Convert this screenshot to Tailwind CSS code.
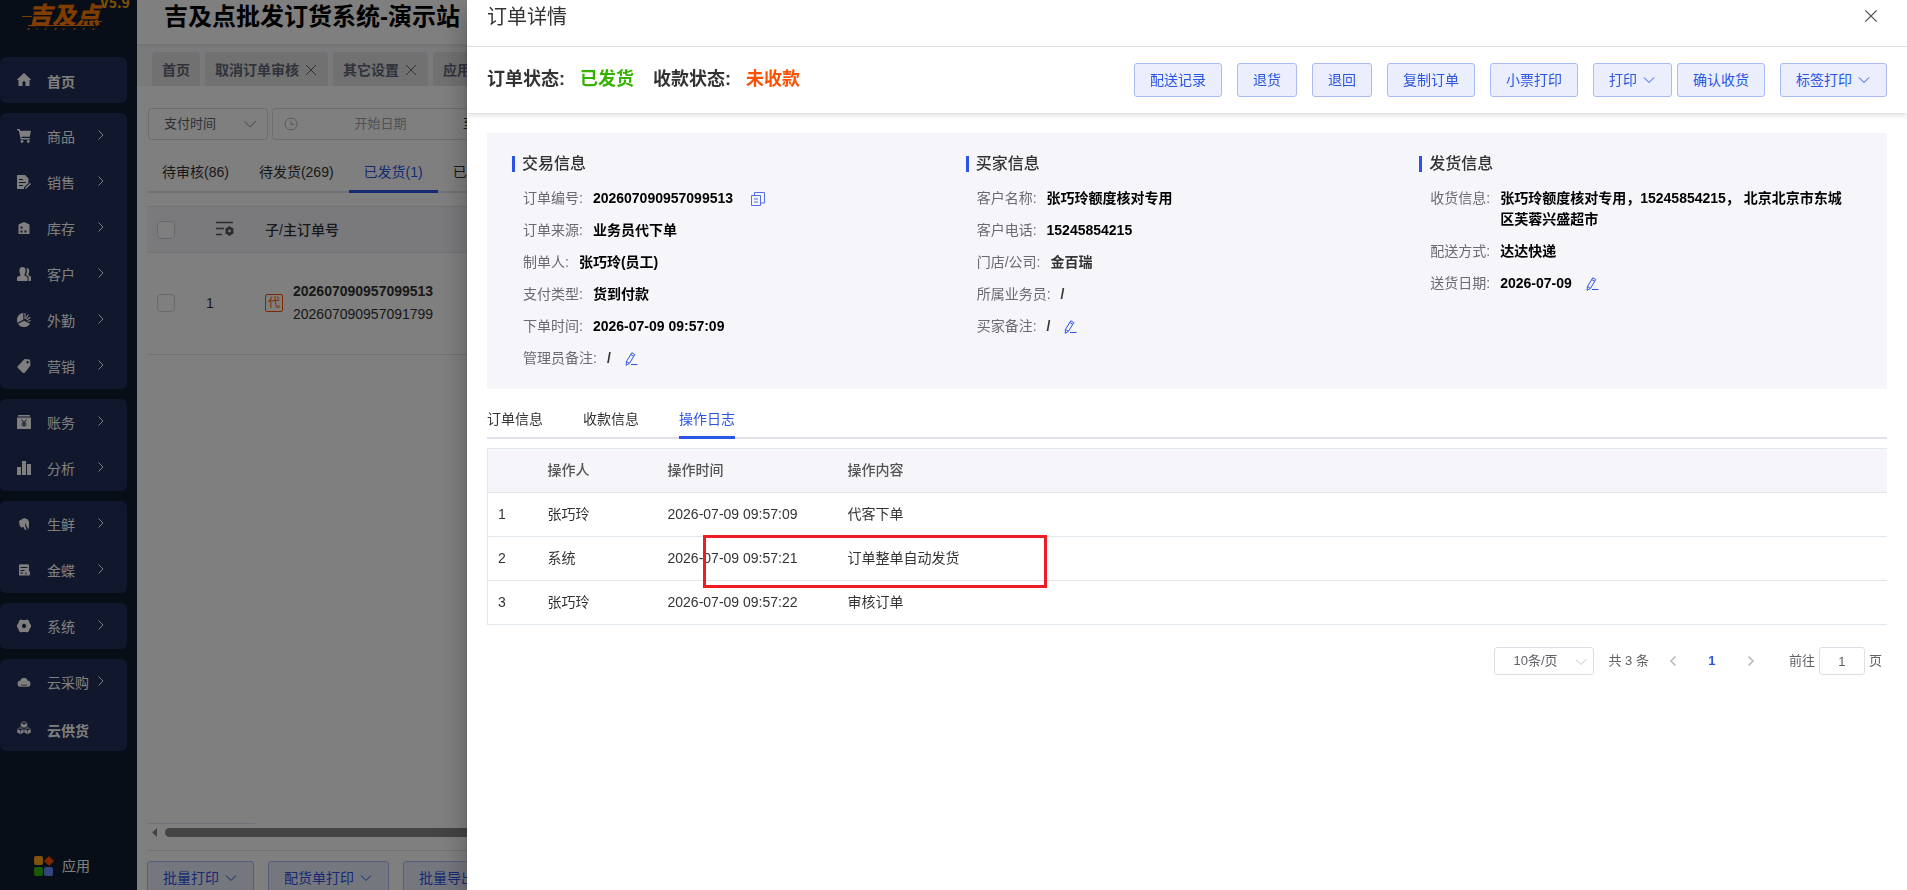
<!DOCTYPE html>
<html lang="zh-CN">

<head>
    <meta charset="UTF-8">
    <meta name="viewport" content="width=device-width, initial-scale=1.0">
    <script src="https://cdn.jsdelivr.net/npm/@tailwindcss/browser@4"></script>
    <title>订单详情</title>
</head>

<body class="h-screen overflow-hidden bg-white text-sm text-[#333333] font-['Liberation_Sans','Noto_Sans_CJK_SC',sans-serif]">
    <!-- shared icons -->
    <svg class="hidden">
        <symbol id="down" viewBox="0 0 14 14"><path d="M2 4.500l5 5 5-5" fill="none" stroke="currentColor" /></symbol>
        <symbol id="right" viewBox="0 0 8 12"><path d="M1.500 1.500L6 6l-4.500 4.500" fill="none" stroke="currentColor" /></symbol>
        <symbol id="close" viewBox="0 0 14 14"><path d="M2 2l10 10M12 2L2 12" fill="none" stroke="currentColor" /></symbol>
        <symbol id="edit" viewBox="0 0 14 14"><path d="M7.800.8l3 1.700-5.300 8.800-3.300 2 .2-3.800zM6.800 2.600l3 1.800M2.500 9.500l3 1.800M7 12.500h6.500" fill="none" stroke="currentColor" /></symbol>
    </svg>

    <div class="flex h-full">
        <!-- sidebar -->
        <aside class="flex h-full w-[137px] shrink-0 flex-col bg-[#101c30] text-white">
            <div class="relative h-[57px] shrink-0">
                <span class="absolute -top-2 left-[100px] text-sm leading-5 font-bold text-[#f5a800] font-['Noto_Sans_CJK_SC',sans-serif]">V5.9</span>
                <div class="pt-1 pl-7 text-2xl leading-6 font-black text-[#ff7a00] italic">吉及点</div>
                <svg class="absolute top-4 left-5" width="84" height="16" fill="#ff7a00">
                    <path d="M2 0h10v1H2zM70 5h12v1H70zM8 9h66v1H8z" />
                    <path d="M8 12h2l-1 2H7zM17 12h1l-1 2h-1zM26 12h1l-1 2h-2zM35 12h2l-1 2h-2zM44 12h1l-1 2h-2zM54 12h2l-1 2h-2zM63 12h2l-1 2h-1zM73 12h2l-1 2h-2z" opacity=".7" />
                </svg>
            </div>
            <nav class="flex w-[127px] flex-col gap-2.5">
                <div class="rounded-md bg-[#222e58]">
                    <a href="#" class="flex h-[46px] items-center pl-[17px] font-bold">
                        <svg class="size-3.5" viewBox="0 0 14 14" fill="currentColor"><path d="M7 0l7 6.500-.7.8-.8-.3V13H8.500V9.500a1.500 1.500 0 0 0-3 0V13h-4V7l-.8.3L0 6.500z" /></svg>
                        <span class="pt-1 pl-4">首页</span>
                    </a>
                </div>
                <div class="rounded-md bg-[#222e58]">
                    <a href="#" class="flex h-[46px] items-center pl-[17px]">
                        <svg class="size-3.5" viewBox="0 0 14 14" fill="currentColor"><path d="M0 0h2.800l.5 1.700H14l-1.300 6H4.500l.3 1.300h8v1.400H3.700L1.800 1.400H0z" /><circle cx="5" cy="12.500" r="1.400" /><circle cx="11.300" cy="12.500" r="1.400" /></svg>
                        <span class="w-[66px] pt-0.5 pl-4 whitespace-nowrap">商品</span>
                        <svg class="mb-0.5 h-3 w-2"><use href="#right" /></svg>
                    </a>
                    <a href="#" class="flex h-[46px] items-center pl-[17px]">
                        <svg class="size-3.5" viewBox="0 0 14 14" fill="currentColor"><path fill-rule="evenodd" d="M0 0h8l3.500 3.500V8L7 12.500V14H0zM2 4v1h4V4zm0 3v1h7V7zm0 3v1h4v-1z" /><path d="M8.500 12.500l4.500-4.500 1 1-4.500 4.500-1.500.5z" /></svg>
                        <span class="w-[66px] pt-0.5 pl-4 whitespace-nowrap">销售</span>
                        <svg class="mb-0.5 h-3 w-2"><use href="#right" /></svg>
                    </a>
                    <a href="#" class="flex h-[46px] items-center pl-[17px]">
                        <svg class="size-3.5" viewBox="0 0 14 14" fill="currentColor"><path fill-rule="evenodd" d="M7 1l5.500 2.500V13h-11V3.500zM3.500 5.500v2h2v-2zm0 4v2h2v-2zm4 0v2h2v-2z" /></svg>
                        <span class="w-[66px] pt-0.5 pl-4 whitespace-nowrap">库存</span>
                        <svg class="mb-0.5 h-3 w-2"><use href="#right" /></svg>
                    </a>
                    <a href="#" class="flex h-[46px] items-center pl-[17px]">
                        <svg class="size-3.5" viewBox="0 0 14 14" fill="currentColor"><path d="M5.500 0C8 0 8.800 1.800 8.600 4 8.400 6 7.500 7 7.500 8.500l3 1.500V14H0v-4l3.500-1.500C3.500 7 2.500 6 2.400 4 2.200 1.800 3 0 5.500 0z" /><path d="M9.300 1c2 0 3 1.200 2.900 3-.1 1.700-.8 2.500-.8 4L14 9.800V14h-2.500V9.500l-2.500-1.400c.2-1 .8-2.100.9-3.800C10 3 9.800 1.800 9.300 1z" /></svg>
                        <span class="w-[66px] pt-0.5 pl-4 whitespace-nowrap">客户</span>
                        <svg class="mb-0.5 h-3 w-2"><use href="#right" /></svg>
                    </a>
                    <a href="#" class="flex h-[46px] items-center pl-[17px]">
                        <svg class="size-3.5" viewBox="0 0 14 14" fill="currentColor"><path d="M6.300 0v6.700L.5 9.800A7 7 0 0 1 6.300 0zM7 7.800l6 3A7 7 0 0 1 1 10.800z" /><path d="M8 0v6M9 5.500L11.500 1.500M9.500 7L13.300 4.200M10.500 8.500l3.300-1" stroke="currentColor" stroke-width="1.200" /></svg>
                        <span class="w-[66px] pt-0.5 pl-4 whitespace-nowrap">外勤</span>
                        <svg class="mb-0.5 h-3 w-2"><use href="#right" /></svg>
                    </a>
                    <a href="#" class="flex h-[46px] items-center pl-[17px]">
                        <svg class="size-3.5" viewBox="0 0 14 14" fill="currentColor"><path fill-rule="evenodd" d="M7.500 0L13 .5l.5 6L7.500 14H6L.5 8.500V7.500zM10.500 2a1.200 1.200 0 1 0 .1 0z" /></svg>
                        <span class="w-[66px] pt-0.5 pl-4 whitespace-nowrap">营销</span>
                        <svg class="mb-0.5 h-3 w-2"><use href="#right" /></svg>
                    </a>
                </div>
                <div class="rounded-md bg-[#222e58]">
                    <a href="#" class="flex h-[46px] items-center pl-[17px]">
                        <svg class="size-3.5" viewBox="0 0 14 14" fill="currentColor"><path d="M1 0h12v1.500H1zM0 2.500h14V14H0z" /><path d="M4.500 4.500L7 7.500l2.500-3M4.500 8h5M4.500 10h5M7 7.500V12" fill="none" stroke="#222e58" /></svg>
                        <span class="w-[66px] pt-0.5 pl-4 whitespace-nowrap">账务</span>
                        <svg class="mb-0.5 h-3 w-2"><use href="#right" /></svg>
                    </a>
                    <a href="#" class="flex h-[46px] items-center pl-[17px]">
                        <svg class="size-3.5" viewBox="0 0 14 14" fill="currentColor"><path d="M0 6h4v8H0zM5 0h4v14H5zM10 3h4v11h-4z" /></svg>
                        <span class="w-[66px] pt-0.5 pl-4 whitespace-nowrap">分析</span>
                        <svg class="mb-0.5 h-3 w-2"><use href="#right" /></svg>
                    </a>
                </div>
                <div class="rounded-md bg-[#222e58]">
                    <a href="#" class="flex h-[46px] items-center pl-[17px]">
                        <svg class="size-3.5" viewBox="0 0 14 14" fill="currentColor"><path d="M7 1l4 1.500L12 5v5l-.5 2.500L9 8l-.5-2L8 8l1.500 5H8L6.500 10 4 10.500 2.500 8 2 4z" /></svg>
                        <span class="w-[66px] pt-0.5 pl-4 whitespace-nowrap">生鲜</span>
                        <svg class="mb-0.5 h-3 w-2"><use href="#right" /></svg>
                    </a>
                    <a href="#" class="flex h-[46px] items-center pl-[17px]">
                        <svg class="size-3.5" viewBox="0 0 14 14" fill="currentColor"><path fill-rule="evenodd" d="M2 1.500h2.500V1h1.300v.5h2.400V1h1.300v.5H12V8l1 1v3l-1 .5H2zM3.500 4v1h7V4zm0 3v1h4V7zm0 2.500v1H6v-1zm5 0v2h1v-2z" /></svg>
                        <span class="w-[66px] pt-0.5 pl-4 whitespace-nowrap">金蝶</span>
                        <svg class="mb-0.5 h-3 w-2"><use href="#right" /></svg>
                    </a>
                </div>
                <div class="rounded-md bg-[#222e58]">
                    <a href="#" class="flex h-[46px] items-center pl-[17px]">
                        <svg class="size-3.5" viewBox="0 0 14 14" fill="currentColor"><path fill-rule="evenodd" d="M4 .5L5.500 1h3L10 .5l2 1.200.5 2.300L14 6v2l-1.500 2-.5 2.300-2 1.200-1.500-.5h-3l-1.500.5-2-1.200-.5-2.300L0 8V6l1.500-2L2 1.700zM7 4.800a2.200 2.200 0 1 0 .1 0z" /></svg>
                        <span class="w-[66px] pt-0.5 pl-4 whitespace-nowrap">系统</span>
                        <svg class="mb-0.5 h-3 w-2"><use href="#right" /></svg>
                    </a>
                </div>
                <div class="rounded-md bg-[#222e58]">
                    <a href="#" class="flex h-[46px] items-center pl-[17px]">
                        <svg class="size-3.5" viewBox="0 0 14 14" fill="currentColor"><path fill-rule="evenodd" d="M3.500 5.500a3.600 3.600 0 0 1 7 0A3.200 3.200 0 0 1 11 11.800H3a3.200 3.200 0 0 1 .5-6.300zM4 9.800v.8h6v-.8z" /></svg>
                        <span class="w-[66px] pt-0.5 pl-4 whitespace-nowrap">云采购</span>
                        <svg class="mb-0.5 h-3 w-2"><use href="#right" /></svg>
                    </a>
                    <a href="#" class="flex h-[46px] items-center pl-[17px] font-bold">
                        <svg class="size-3.5" viewBox="0 0 14 14" fill="currentColor" stroke="#222e58" stroke-width=".5"><path d="M7 0l3.500 1.600v4L7 7.200 3.500 5.600v-4zM3.500 6L7 7.600v4l-3.500 2L0 11.600v-4zM10.500 6L14 7.600v4l-3.500 2L7 11.600v-4zM3.500 1.600L7 3.200l3.500-1.600M0 7.600l3.500 1.800L7 7.600l3.500 1.800L14 7.600M3.500 9.400v4M10.500 9.400v4" /></svg>
                        <span class="pt-1.5 pl-4">云供货</span>
                    </a>
                </div>
            </nav>
            <a href="#" class="mt-auto mb-3.5 flex items-center gap-2 pl-[34px]">
                <svg width="20" height="20"><rect width="9" height="9" rx="2" fill="#ffa51e" /><path d="M15 .5l4.500 4.500-4.500 4.500-4.500-4.500z" fill="#ff5000" stroke="#ff5000" stroke-linejoin="round" /><rect y="11" width="9" height="9" rx="2" fill="#36b300" /><rect x="10" y="11" width="9" height="9" rx="2" fill="#6a8dff" /></svg>
                <span>应用</span>
            </a>
        </aside>

        <!-- order list behind the drawer -->
        <main class="flex min-w-0 flex-1 flex-col overflow-hidden">
            <h1 class="h-11 shrink-0 pt-[5px] pl-[27px] text-2xl leading-6 font-bold whitespace-nowrap text-black">吉及点批发订货系统-演示站</h1>
            <div class="flex h-[42px] shrink-0 items-end gap-[5px] bg-[#f5f5fa] pl-[15px] font-bold whitespace-nowrap text-[#606676] shadow-[inset_0_3px_3px_-2px_#dcdce2]">
                <a href="#" class="flex h-[34px] items-center rounded-t bg-[#e2e2e2] px-2.5 pt-px">首页</a>
                <a href="#" class="flex h-[34px] items-center gap-[5px] rounded-t bg-[#e2e2e2] px-2.5 pt-px">取消订单审核<svg class="size-3.5"><use href="#close" /></svg></a>
                <a href="#" class="flex h-[34px] items-center gap-[5px] rounded-t bg-[#e2e2e2] px-2.5 pt-px">其它设置<svg class="size-3.5"><use href="#close" /></svg></a>
                <a href="#" class="flex h-[34px] items-center gap-[5px] rounded-t bg-[#e2e2e2] px-2.5 pt-px">应用<svg class="size-3.5"><use href="#close" /></svg></a>
            </div>
            <div class="flex min-h-0 flex-1 flex-col pt-[22px] pl-2.5">
                <div class="flex gap-1 text-[13px]">
                    <div class="relative ml-px w-[120px]">
                        <select aria-label="时间类型" class="h-8 w-full appearance-none rounded border border-[#d9dce6] pl-[15px] text-[#606266]">
                            <option>支付时间</option>
                        </select>
                        <svg class="absolute top-2 right-2.5 size-4 text-[#b0b4bd]"><use href="#down" /></svg>
                    </div>
                    <div class="flex h-8 w-[350px] items-center rounded border border-[#d9dce6] pl-[11px]">
                        <svg class="size-3.5 text-[#b0b4bd]" viewBox="0 0 14 14" fill="none" stroke="currentColor"><circle cx="7" cy="7" r="6" /><path d="M7 3.500V7.500h3" /></svg>
                        <input aria-label="开始日期" placeholder="开始日期" class="w-[165px] text-center placeholder:text-[#a0a3aa]">
                        <span>至</span>
                    </div>
                </div>
                <div class="mt-[11px] flex h-[42px] shrink-0 border-b-2 border-[#dfe4ed] whitespace-nowrap">
                    <button class="px-[15px] pt-0.5">待审核(86)</button>
                    <button class="px-[15px] pt-0.5">待发货(269)</button>
                    <button class="-mb-0.5 border-b-[3px] border-[#2b54e6] px-[15px] pt-0.5 text-[#2b54e6]">已发货(1)</button>
                    <button class="px-[15px] pt-0.5">已完成(12)</button>
                </div>
                <table class="mt-[13px] w-full table-fixed text-left">
                    <thead>
                        <tr class="h-[46px] border-y border-[#e4e6ee] bg-[#f5f5fa]">
                            <th class="w-[59px] pl-2.5"><input type="checkbox" aria-label="全选" class="block size-[18px] appearance-none rounded-sm border border-[#d0d3dc] bg-white"></th>
                            <th class="w-[59px] pl-2.5">
                                <svg class="mb-0.5" width="18" height="16" fill="none" stroke="#555" stroke-width="1.500"><path d="M0 1.500h17M0 7.500h8M0 13.500h6" /><circle cx="13.500" cy="10" r="2.700" stroke-width="2.500" /><path d="M13.500 5v2M13.500 13v2M9.500 7.500l1.500 1M16 11.500l1.500 1M9.500 12.500l1.500-1M16 8.500l1.500-1" /></svg>
                            </th>
                            <th class="font-medium">子/主订单号</th>
                        </tr>
                    </thead>
                    <tbody>
                        <tr class="h-[102px] border-b border-[#e4e6ee]">
                            <td class="pb-0.5 pl-2.5"><input type="checkbox" aria-label="选择订单" class="block size-[18px] appearance-none rounded-sm border border-[#d0d3dc] bg-white"></td>
                            <td class="pb-0.5">1</td>
                            <td class="pb-0.5">
                                <div class="flex items-center gap-2.5">
                                    <span class="flex size-[18px] items-center justify-center rounded-[2px] border border-[#ff5000] text-xs text-[#ff5000]">代</span>
                                    <div class="leading-[23px]">
                                        <b class="block">202607090957099513</b>
                                        <span class="block">202607090957091799</span>
                                    </div>
                                </div>
                            </td>
                        </tr>
                    </tbody>
                </table>
                <div class="mt-auto w-[108px] border-t border-[#dfe2f0]"></div>
                <div class="flex h-[26px] shrink-0 items-center gap-2 pb-2.5 pl-[5px]">
                    <svg width="5" height="9" fill="#888"><path d="M5 0v9L0 4.500z" /></svg>
                    <div class="h-[9px] flex-1 rounded-full bg-[#888888]"></div>
                </div>
                <div class="flex h-10 shrink-0 gap-3.5 border-t border-[#e4e6ee] pt-2.5 whitespace-nowrap text-[#2b54e6]">
                    <button class="flex h-[34px] items-center gap-[5px] rounded-[3px] border border-[#aabbf5] bg-[#eaeefd] px-[15px]">批量打印<svg class="size-3.5"><use href="#down" /></svg></button>
                    <button class="flex h-[34px] items-center gap-[5px] rounded-[3px] border border-[#aabbf5] bg-[#eaeefd] px-[15px]">配货单打印<svg class="size-3.5"><use href="#down" /></svg></button>
                    <button class="flex h-[34px] items-center gap-[5px] rounded-[3px] border border-[#aabbf5] bg-[#eaeefd] px-[15px]">批量导出<svg class="size-3.5"><use href="#down" /></svg></button>
                </div>
            </div>
        </main>
    </div>

    <!-- mask -->
    <div class="fixed inset-0 bg-black/50"></div>

    <!-- order detail drawer -->
    <section role="dialog" aria-labelledby="drawer-title" class="fixed inset-y-0 right-0 left-[467px] bg-white shadow-[0_8px_10px_-5px_rgba(0,0,0,0.2),0_16px_24px_2px_rgba(0,0,0,0.14),0_6px_30px_5px_rgba(0,0,0,0.12)]">
        <header class="flex h-[47px] items-start justify-between border-b border-[#dfe6ec] pr-7 pl-5">
            <h2 id="drawer-title" class="pt-[3px] text-xl leading-7">订单详情</h2>
            <button aria-label="关闭" class="pt-2 text-[#444444]"><svg class="size-4"><use href="#close" /></svg></button>
        </header>
        <div class="flex h-[66px] items-center justify-between px-5 shadow-[0_2px_5px_rgba(0,0,0,0.15)]">
            <div class="flex pb-0.5 text-lg leading-7 font-bold whitespace-nowrap">
                <span class="mr-[15px]">订单状态:</span>
                <span class="mr-[19px] text-[#36b300]">已发货</span>
                <span class="mr-[15px]">收款状态:</span>
                <span class="text-[#ff5000]">未收款</span>
            </div>
            <div class="flex gap-[15px] whitespace-nowrap text-[#2b54e6]">
                <button class="h-[34px] rounded-[3px] border border-[#aabbf5] bg-[#eaeefd] px-[15px]">配送记录</button>
                <button class="h-[34px] rounded-[3px] border border-[#aabbf5] bg-[#eaeefd] px-[15px]">退货</button>
                <button class="h-[34px] rounded-[3px] border border-[#aabbf5] bg-[#eaeefd] px-[15px]">退回</button>
                <button class="h-[34px] rounded-[3px] border border-[#aabbf5] bg-[#eaeefd] px-[15px]">复制订单</button>
                <button class="h-[34px] rounded-[3px] border border-[#aabbf5] bg-[#eaeefd] px-[15px]">小票打印</button>
                <div class="flex gap-[5px]">
                    <button class="flex h-[34px] items-center gap-[5px] rounded-[3px] border border-[#aabbf5] bg-[#eaeefd] px-[15px]">打印<svg class="size-3.5"><use href="#down" /></svg></button>
                    <button class="h-[34px] rounded-[3px] border border-[#aabbf5] bg-[#eaeefd] px-[15px]">确认收货</button>
                </div>
                <button class="flex h-[34px] items-center gap-[5px] rounded-[3px] border border-[#aabbf5] bg-[#eaeefd] px-[15px]">标签打印<svg class="size-3.5"><use href="#down" /></svg></button>
            </div>
        </div>

        <div class="px-5 pt-5">
            <div class="grid min-h-64 grid-cols-3 bg-[#f5f5fa] pt-[22px] pr-3.5 pl-[25px]">
                <div>
                    <h3 class="flex items-center gap-[7px] text-base leading-[18px] font-medium before:h-4 before:w-[3px] before:bg-[#2b54e6]">交易信息</h3>
                    <dl class="flex flex-col gap-[11px] pt-[15px] pl-[11px] leading-[21px]">
                        <div class="flex gap-2.5"><dt class="text-[#6b6b6f]">订单编号:</dt><dd class="flex items-center font-bold text-black">202607090957099513
                            <button aria-label="复制" class="ml-[18px] text-[#4f70ea]"><svg class="size-3.5" viewBox="0 0 14 14" fill="none" stroke="currentColor"><path d="M.5 3.500h9v10h-9zM3.500 3.500v-3h10v10.500h-4M3 7h4M3 10h4" /></svg></button></dd></div>
                        <div class="flex gap-2.5"><dt class="text-[#6b6b6f]">订单来源:</dt><dd class="font-bold text-black">业务员代下单</dd></div>
                        <div class="flex gap-2.5"><dt class="text-[#6b6b6f]">制单人:</dt><dd class="font-bold text-black">张巧玲(员工)</dd></div>
                        <div class="flex gap-2.5"><dt class="text-[#6b6b6f]">支付类型:</dt><dd class="font-bold text-black">货到付款</dd></div>
                        <div class="flex gap-2.5"><dt class="text-[#6b6b6f]">下单时间:</dt><dd class="font-bold text-black">2026-07-09 09:57:09</dd></div>
                        <div class="flex gap-2.5"><dt class="text-[#6b6b6f]">管理员备注:</dt><dd class="flex items-center font-bold">/
                            <button aria-label="编辑管理员备注" class="ml-[13px] text-[#2b54e6]"><svg class="size-3.5"><use href="#edit" /></svg></button></dd></div>
                    </dl>
                </div>
                <div>
                    <h3 class="flex items-center gap-[7px] text-base leading-[18px] font-medium before:h-4 before:w-[3px] before:bg-[#2b54e6]">买家信息</h3>
                    <dl class="flex flex-col gap-[11px] pt-[15px] pl-[11px] leading-[21px]">
                        <div class="flex gap-2.5"><dt class="text-[#6b6b6f]">客户名称:</dt><dd class="font-bold text-black">张巧玲额度核对专用</dd></div>
                        <div class="flex gap-2.5"><dt class="text-[#6b6b6f]">客户电话:</dt><dd class="font-bold text-black">15245854215</dd></div>
                        <div class="flex gap-2.5"><dt class="text-[#6b6b6f]">门店/公司:</dt><dd class="font-bold">金百瑞</dd></div>
                        <div class="flex gap-2.5"><dt class="text-[#6b6b6f]">所属业务员:</dt><dd class="font-bold">/</dd></div>
                        <div class="flex gap-2.5"><dt class="text-[#6b6b6f]">买家备注:</dt><dd class="flex items-center font-bold">/
                            <button aria-label="编辑买家备注" class="ml-[13px] text-[#2b54e6]"><svg class="size-3.5"><use href="#edit" /></svg></button></dd></div>
                    </dl>
                </div>
                <div>
                    <h3 class="flex items-center gap-[7px] text-base leading-[18px] font-medium before:h-4 before:w-[3px] before:bg-[#2b54e6]">发货信息</h3>
                    <dl class="flex flex-col gap-[11px] pt-[15px] pr-7 pl-[11px] leading-[21px]">
                        <div class="flex gap-2.5"><dt class="shrink-0 text-[#6b6b6f]">收货信息:</dt><dd class="font-bold text-black">张巧玲额度核对专用，15245854215， 北京北京市东城区芙蓉兴盛超市</dd></div>
                        <div class="flex gap-2.5"><dt class="text-[#6b6b6f]">配送方式:</dt><dd class="font-bold text-black">达达快递</dd></div>
                        <div class="flex gap-2.5"><dt class="text-[#6b6b6f]">送货日期:</dt><dd class="flex items-center font-bold text-black">2026-07-09
                            <button aria-label="编辑送货日期" class="ml-[13px] text-[#2b54e6]"><svg class="size-3.5"><use href="#edit" /></svg></button></dd></div>
                    </dl>
                </div>
            </div>

            <div class="mt-2.5 flex h-10 gap-10 border-b-2 border-[#dfe2ee]">
                <button class="pt-0.5">订单信息</button>
                <button class="pt-0.5">收款信息</button>
                <button class="-mb-0.5 border-b-[3px] border-[#2b54e6] pt-0.5 text-[#2b54e6]">操作日志</button>
            </div>

            <div class="relative mt-[9px]">
                <table class="w-full table-fixed border-l border-[#dfe6ec] text-left">
                    <thead>
                        <tr class="h-11 border-y border-[#dfe6ec] bg-[#f5f5fa] text-[#555555]">
                            <th class="w-[50px]"></th>
                            <th class="w-[120px] pb-0.5 pl-2.5 font-medium">操作人</th>
                            <th class="w-[180px] pb-0.5 pl-2.5 font-medium">操作时间</th>
                            <th class="pb-0.5 pl-2.5 font-medium">操作内容</th>
                        </tr>
                    </thead>
                    <tbody>
                        <tr class="h-11 border-b border-[#dfe6ec]">
                            <td class="pb-0.5 pl-2.5">1</td>
                            <td class="pb-0.5 pl-2.5">张巧玲</td>
                            <td class="pb-0.5 pl-2.5">2026-07-09 09:57:09</td>
                            <td class="pb-0.5 pl-2.5">代客下单</td>
                        </tr>
                        <tr class="h-11 border-b border-[#dfe6ec]">
                            <td class="pb-0.5 pl-2.5">2</td>
                            <td class="pb-0.5 pl-2.5">系统</td>
                            <td class="pb-0.5 pl-2.5">2026-07-09 09:57:21</td>
                            <td class="pb-0.5 pl-2.5">订单整单自动发货</td>
                        </tr>
                        <tr class="h-11 border-b border-[#dfe6ec]">
                            <td class="pb-0.5 pl-2.5">3</td>
                            <td class="pb-0.5 pl-2.5">张巧玲</td>
                            <td class="pb-0.5 pl-2.5">2026-07-09 09:57:22</td>
                            <td class="pb-0.5 pl-2.5">审核订单</td>
                        </tr>
                    </tbody>
                </table>
                <!-- highlight on the auto-shipped record -->
                <div class="pointer-events-none absolute top-[87px] left-[216px] h-[53px] w-[344px] border-[3px] border-[#ee1c24]"></div>
            </div>

            <div class="mt-[22px] flex h-7 items-center justify-end pr-[5px] text-[13px] whitespace-nowrap text-[#606266]">
                <div class="relative w-[100px]">
                    <select aria-label="每页条数" class="h-7 w-full appearance-none rounded-[3px] border border-[#dcdfe6] pl-[19px]">
                        <option>10条/页</option>
                    </select>
                    <svg class="absolute top-2 right-1.5 size-3.5 text-[#c0c4cc]"><use href="#down" /></svg>
                </div>
                <span class="ml-[15px]">共 3 条</span>
                <button aria-label="上一页" class="ml-5 text-[#b4b8c0]"><svg width="8" height="12" fill="none" stroke="currentColor" stroke-width="1.500"><path d="M6.500 1.500L2 6l4.500 4.500" /></svg></button>
                <button class="w-[70px] font-bold text-[#2b54e6]">1</button>
                <button aria-label="下一页" class="text-[#b4b8c0]"><svg width="8" height="12" fill="none" stroke="currentColor" stroke-width="1.500"><path d="M1.500 1.500L6 6l-4.500 4.500" /></svg></button>
                <label for="page" class="ml-[34px]">前往</label>
                <input id="page" value="1" class="mx-1 h-7 w-[46px] rounded-[3px] border border-[#dcdfe6] text-center">
                <span>页</span>
            </div>
        </div>
    </section>
</body>

</html>
